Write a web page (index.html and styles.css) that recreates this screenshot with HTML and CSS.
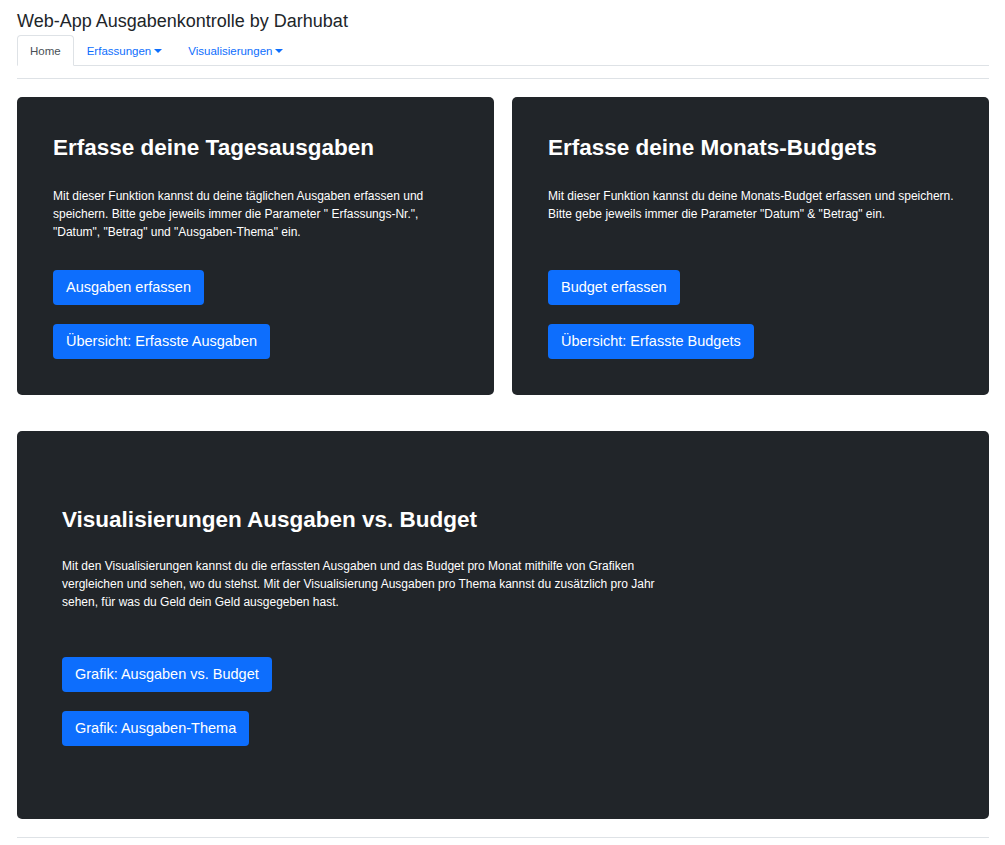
FILE: index.html
```html
<!DOCTYPE html>
<html lang="de">
<head>
<meta charset="utf-8">
<title>Ausgabenkontrolle</title>
<link rel="stylesheet" href="styles.css">
</head>
<body>
<header class="header">
  <h1 class="app-title">Web-App Ausgabenkontrolle by Darhubat</h1>
  <ul class="tabs">
    <li class="tab tab-active">Home</li>
    <li class="tab tab-link">Erfassungen<span class="caret"></span></li>
    <li class="tab tab-link">Visualisierungen<span class="caret"></span></li>
  </ul>
</header>
<hr class="divider divider-top">
<main>
  <section class="cards">
    <div class="card">
      <h2 class="card-title">Erfasse deine Tagesausgaben</h2>
      <p class="card-text">Mit dieser Funktion kannst du deine täglichen Ausgaben erfassen und speichern. Bitte gebe jeweils immer die Parameter " Erfassungs-Nr.", "Datum", "Betrag" und "Ausgaben-Thema" ein.</p>
      <div class="btns">
        <a class="btn">Ausgaben erfassen</a>
        <a class="btn">Übersicht: Erfasste Ausgaben</a>
      </div>
    </div>
    <div class="card">
      <h2 class="card-title">Erfasse deine Monats-Budgets</h2>
      <p class="card-text">Mit dieser Funktion kannst du deine Monats-Budget erfassen und speichern. Bitte gebe jeweils immer die Parameter "Datum" &amp; "Betrag" ein.</p>
      <div class="btns">
        <a class="btn">Budget erfassen</a>
        <a class="btn">Übersicht: Erfasste Budgets</a>
      </div>
    </div>
  </section>
  <section class="card card-wide">
    <h2 class="card-title">Visualisierungen Ausgaben vs. Budget</h2>
    <p class="card-text card-text-wide">Mit den Visualisierungen kannst du die erfassten Ausgaben und das Budget pro Monat mithilfe von Grafiken vergleichen und sehen, wo du stehst. Mit der Visualisierung Ausgaben pro Thema kannst du zusätzlich pro Jahr sehen, für was du Geld dein Geld ausgegeben hast.</p>
    <div class="btns btns-wide">
      <a class="btn">Grafik: Ausgaben vs. Budget</a>
      <a class="btn">Grafik: Ausgaben-Thema</a>
    </div>
  </section>
</main>
<hr class="divider divider-bottom">
</body>
</html>
```

FILE: styles.css
```css
* { box-sizing: border-box; }
body {
  margin: 0;
  padding: 0 16px 0 17px;
  font-family: "Segoe UI", "Liberation Sans", Arial, sans-serif;
  color: #212529;
  background: #fff;
}
.app-title {
  margin: 10px 0 0;
  font-size: 18px;
  font-weight: 400;
  line-height: 22px;
  color: #212529;
}
.tabs {
  list-style: none;
  margin: 3px 0 0;
  padding: 0;
  display: flex;
  border-bottom: 1px solid #dee2e6;
  height: 31px;
}
.tab {
  font-size: 11.5px;
  line-height: 14px;
  padding: 8px 12px;
  margin-bottom: -1px;
  border: 1px solid transparent;
  border-radius: 4px 4px 0 0;
}
.tab-active {
  color: #495057;
  border-color: #dee2e6 #dee2e6 #fff;
  background: #fff;
}
.tab-link { color: #0d6efd; }
.caret {
  display: inline-block;
  margin-left: 3px;
  vertical-align: 2px;
  border-top: 4px solid #0d6efd;
  border-left: 4px solid transparent;
  border-right: 4px solid transparent;
}
.divider {
  border: 0;
  border-top: 1px solid #dee2e6;
  margin: 0;
}
.divider-top { margin-top: 12px; margin-bottom: 18px; }
.divider-bottom { margin-top: 18px; }
.cards {
  display: grid;
  grid-template-columns: 1fr 1fr;
  gap: 18px;
}
.card {
  background: #212529;
  color: #fff;
  border-radius: 5px;
  padding: 36px 28px 36px 36px;
  display: flex;
  flex-direction: column;
}
.card-title {
  margin: 0;
  font-size: 22.5px;
  font-weight: 700;
  line-height: 29px;
}
.card-text {
  margin: 25px 0 0;
  font-size: 12px;
  line-height: 18px;
}
.btns {
  display: flex;
  flex-direction: column;
  align-items: flex-start;
  gap: 19px;
  margin-top: auto;
  padding-top: 29px;
}
.btn {
  display: inline-block;
  background: #0d6efd;
  color: #fff;
  font-size: 14.5px;
  line-height: 21px;
  padding: 7px 13px;
  border-radius: 4px;
}
.card-wide {
  margin-top: 36px;
  padding: 74px 45px 73px;
}
.card-text-wide { max-width: 610px; margin-top: 23px; }
.btns-wide { padding-top: 46px; }
```
